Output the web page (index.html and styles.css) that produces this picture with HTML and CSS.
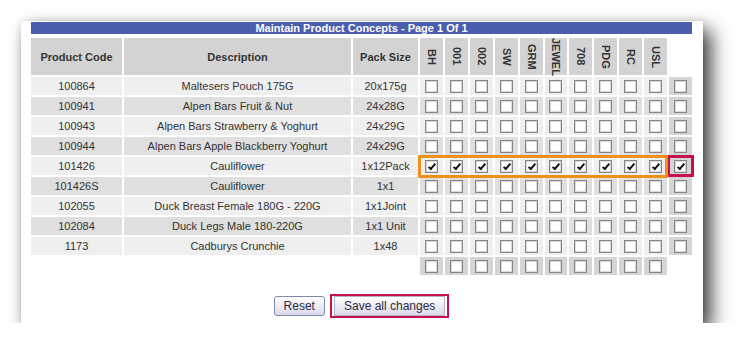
FILE: index.html
```html
<!DOCTYPE html>
<html lang="en">
<head>
  <meta charset="UTF-8" />
  <title>Maintain Product Concepts</title>
  <link rel="stylesheet" href="styles.css">
</head>
<body>

  <div class="panel">
    <div class="title">Maintain Product Concepts - Page 1 Of 1</div>

    <div class="grid">
      <table class="concepts">
        <colgroup>
          <col class="col-code"><col class="col-desc"><col class="col-pack">
          <col span="11">
        </colgroup>
        <tr>
          <th>Product Code</th>
          <th>Description</th>
          <th>Pack Size</th>
          <th class="site"><span>BH</span></th>
          <th class="site"><span>001</span></th>
          <th class="site"><span>002</span></th>
          <th class="site"><span>SW</span></th>
          <th class="site"><span>GRM</span></th>
          <th class="site"><span>JEWEL</span></th>
          <th class="site"><span>708</span></th>
          <th class="site"><span>PDG</span></th>
          <th class="site"><span>RC</span></th>
          <th class="site"><span>USL</span></th>
          <th class="blank"></th>
        </tr>
        <tr class="odd">
          <td>100864</td><td>Maltesers Pouch 175G</td><td>20x175g</td>
          <td><input type="checkbox"></td><td><input type="checkbox"></td><td><input type="checkbox"></td><td><input type="checkbox"></td><td><input type="checkbox"></td>
          <td><input type="checkbox"></td><td><input type="checkbox"></td><td><input type="checkbox"></td><td><input type="checkbox"></td><td><input type="checkbox"></td>
          <td class="all"><input type="checkbox"></td>
        </tr>
        <tr class="even">
          <td>100941</td><td>Alpen Bars Fruit &amp; Nut</td><td>24x28G</td>
          <td><input type="checkbox"></td><td><input type="checkbox"></td><td><input type="checkbox"></td><td><input type="checkbox"></td><td><input type="checkbox"></td>
          <td><input type="checkbox"></td><td><input type="checkbox"></td><td><input type="checkbox"></td><td><input type="checkbox"></td><td><input type="checkbox"></td>
          <td class="all"><input type="checkbox"></td>
        </tr>
        <tr class="odd">
          <td>100943</td><td>Alpen Bars Strawberry &amp; Yoghurt</td><td>24x29G</td>
          <td><input type="checkbox"></td><td><input type="checkbox"></td><td><input type="checkbox"></td><td><input type="checkbox"></td><td><input type="checkbox"></td>
          <td><input type="checkbox"></td><td><input type="checkbox"></td><td><input type="checkbox"></td><td><input type="checkbox"></td><td><input type="checkbox"></td>
          <td class="all"><input type="checkbox"></td>
        </tr>
        <tr class="even">
          <td>100944</td><td>Alpen Bars Apple Blackberry Yoghurt</td><td>24x29G</td>
          <td><input type="checkbox"></td><td><input type="checkbox"></td><td><input type="checkbox"></td><td><input type="checkbox"></td><td><input type="checkbox"></td>
          <td><input type="checkbox"></td><td><input type="checkbox"></td><td><input type="checkbox"></td><td><input type="checkbox"></td><td><input type="checkbox"></td>
          <td class="all"><input type="checkbox"></td>
        </tr>
        <tr class="odd">
          <td>101426</td><td>Cauliflower</td><td>1x12Pack</td>
          <td><input type="checkbox" checked></td><td><input type="checkbox" checked></td><td><input type="checkbox" checked></td><td><input type="checkbox" checked></td><td><input type="checkbox" checked></td>
          <td><input type="checkbox" checked></td><td><input type="checkbox" checked></td><td><input type="checkbox" checked></td><td><input type="checkbox" checked></td><td><input type="checkbox" checked></td>
          <td class="all picked"><input type="checkbox" checked></td>
        </tr>
        <tr class="even">
          <td>101426S</td><td>Cauliflower</td><td>1x1</td>
          <td><input type="checkbox"></td><td><input type="checkbox"></td><td><input type="checkbox"></td><td><input type="checkbox"></td><td><input type="checkbox"></td>
          <td><input type="checkbox"></td><td><input type="checkbox"></td><td><input type="checkbox"></td><td><input type="checkbox"></td><td><input type="checkbox"></td>
          <td class="all"><input type="checkbox"></td>
        </tr>
        <tr class="odd">
          <td>102055</td><td>Duck Breast Female 180G - 220G</td><td>1x1Joint</td>
          <td><input type="checkbox"></td><td><input type="checkbox"></td><td><input type="checkbox"></td><td><input type="checkbox"></td><td><input type="checkbox"></td>
          <td><input type="checkbox"></td><td><input type="checkbox"></td><td><input type="checkbox"></td><td><input type="checkbox"></td><td><input type="checkbox"></td>
          <td class="all"><input type="checkbox"></td>
        </tr>
        <tr class="even">
          <td>102084</td><td>Duck Legs Male 180-220G</td><td>1x1 Unit</td>
          <td><input type="checkbox"></td><td><input type="checkbox"></td><td><input type="checkbox"></td><td><input type="checkbox"></td><td><input type="checkbox"></td>
          <td><input type="checkbox"></td><td><input type="checkbox"></td><td><input type="checkbox"></td><td><input type="checkbox"></td><td><input type="checkbox"></td>
          <td class="all"><input type="checkbox"></td>
        </tr>
        <tr class="odd">
          <td>1173</td><td>Cadburys Crunchie</td><td>1x48</td>
          <td><input type="checkbox"></td><td><input type="checkbox"></td><td><input type="checkbox"></td><td><input type="checkbox"></td><td><input type="checkbox"></td>
          <td><input type="checkbox"></td><td><input type="checkbox"></td><td><input type="checkbox"></td><td><input type="checkbox"></td><td><input type="checkbox"></td>
          <td class="all"><input type="checkbox"></td>
        </tr>
        <tr class="column-all">
          <td class="blank" colspan="3"></td>
          <td><input type="checkbox"></td><td><input type="checkbox"></td><td><input type="checkbox"></td><td><input type="checkbox"></td><td><input type="checkbox"></td>
          <td><input type="checkbox"></td><td><input type="checkbox"></td><td><input type="checkbox"></td><td><input type="checkbox"></td><td><input type="checkbox"></td>
          <td class="blank"></td>
        </tr>
      </table>

      <!-- highlight round the ticked row -->
      <div class="mark"></div>
    </div>

    <div class="actions">
      <button type="reset" class="btn">Reset</button>
      <span class="callout"><button type="submit" class="btn">Save all changes</button></span>
    </div>
  </div>

</body>
</html>
```

FILE: styles.css
```css
body {
  margin: 0;
  background: #fff;
  font-family: "Liberation Sans", Arial, sans-serif;
  color: #333;
}
.panel {
  width: 682px;
  margin: 21px 0 0 21px;
  padding: 1px 11px 5px 10px;
  box-sizing: border-box;
  background: #fff;
  box-shadow: 0 0 6px rgba(0,0,0,0.12), 8px 9px 18px rgba(0,0,0,0.75);
}
.title {
  height: 12px;
  line-height: 12px;
  margin-bottom: 2px;
  background: #4a5ead;
  color: #fff;
  font-size: 11px;
  font-weight: bold;
  text-align: center;
}
.grid {
  position: relative;
}
.concepts {
  width: 665px;
  margin-left: -2px;
  border-spacing: 2px;
  table-layout: fixed;
  font-size: 11px;
  color: #333;
}
.col-code { width: 91px; }
.col-desc { width: 227px; }
.col-pack { width: 65px; }
.concepts th,
.concepts td {
  padding: 0;
  height: 18px;
  text-align: center;
  vertical-align: middle;
  white-space: nowrap;
}
.concepts th {
  height: 37px;
  background: #d3d3d3;
  font-weight: bold;
}
.concepts th.site span {
  display: block;
  margin: -1px auto;
  width: 13px;
  line-height: 13px;
  writing-mode: vertical-rl;
}
tr.odd td {
  background: #efefef;
}
tr.even td {
  background: #dfdfdf;
}
tr.column-all td,
.concepts td.all {
  background: #d5d5d5;
}
.concepts th.blank,
.concepts tr td.blank {
  background: none;
}
.concepts td.picked {
  outline: 3px solid #c8104f;
  outline-offset: -1px;
}
.concepts input {
  -webkit-appearance: none;
  appearance: none;
  position: relative;
  width: 13px;
  height: 13px;
  margin: 0;
  box-sizing: border-box;
  border: 1px solid #858585;
  background: #fff;
  box-shadow: inset 0 0 0 1px #d9d9d9;
  vertical-align: middle;
}
.concepts input:checked::after {
  content: "";
  position: absolute;
  left: 4px;
  top: 1px;
  width: 2px;
  height: 6px;
  border: solid #111;
  border-width: 0 2px 2px 0;
  transform: rotate(40deg);
}
.mark {
  position: absolute;
  left: 387px;
  top: 119px;
  width: 250px;
  height: 23px;
  border: 3px solid #f0901c;
  box-sizing: border-box;
  pointer-events: none;
}
.actions {
  display: flex;
  justify-content: center;
  align-items: center;
  gap: 5px;
  margin-top: 17px;
}
.btn {
  height: 20px;
  padding: 0 9px;
  font-family: "Liberation Sans", Arial, sans-serif;
  font-size: 12px;
  color: #2b2b3b;
  border: 1px solid #7d8bb0;
  border-radius: 3px;
  background: linear-gradient(#ffffff, #dcd9ea);
}
.callout {
  display: flex;
  padding: 0 2px;
  border: 2px solid #c8104f;
}
.callout .btn {
  border-color: #b0b4c8;
  border-radius: 0;
}
```
